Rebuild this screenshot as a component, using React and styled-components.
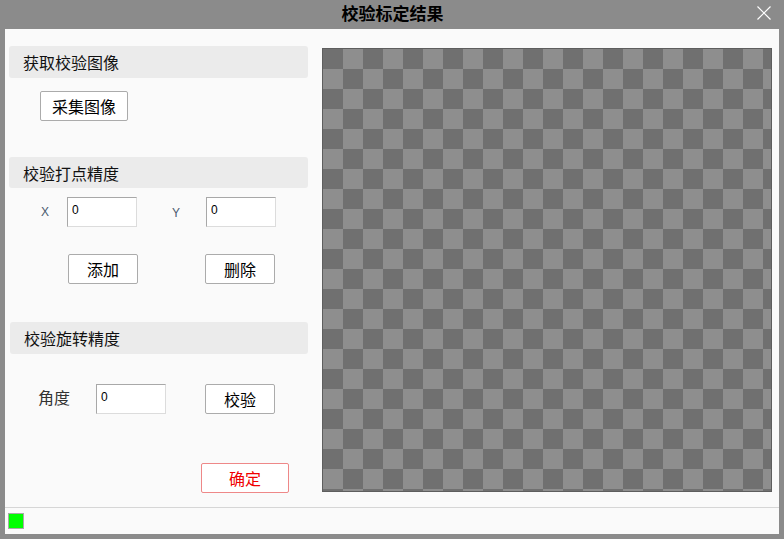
import styled, { createGlobalStyle } from "styled-components";

const cjk = `"Noto Sans CJK SC", "Noto Sans", sans-serif`;

const GlobalStyle = createGlobalStyle`
  html, body {
    margin: 0;
    padding: 0;
    background: #8b8b8b;
  }
  * { box-sizing: border-box; }
`;

export default function App() {
  return (
    <Window>
      <GlobalStyle />
      <TitleBar>
        <Title>校验标定结果</Title>
        <CloseButton>
          <svg width="14" height="14" viewBox="0 0 14 14">
            <path d="M0.5 0.5 L13.5 13.5 M13.5 0.5 L0.5 13.5" stroke="#fff" strokeWidth="1.2" fill="none" />
          </svg>
        </CloseButton>
      </TitleBar>
      <Body>
        <Main>
          <LeftColumn>
            <SectionHeader>获取校验图像</SectionHeader>
            <Row $top={13} $left={31}>
              <Button $width={88}>采集图像</Button>
            </Row>

            <SectionHeader $top={36} $height={31}>校验打点精度</SectionHeader>
            <Row $top={9}>
              <AxisLabel $left={32}>X</AxisLabel>
              <Input $left={17} defaultValue="0" />
              <AxisLabel $left={35} $drop>Y</AxisLabel>
              <Input $left={25} defaultValue="0" />
            </Row>
            <Row $top={27} $left={59}>
              <Button>添加</Button>
              <Button $left={67}>删除</Button>
            </Row>

            <SectionHeader $top={38} $offset={1}>校验旋转精度</SectionHeader>
            <Row $top={30} $left={29}>
              <Label>角度</Label>
              <Input $left={26} defaultValue="0" />
              <Button $left={39}>校验</Button>
            </Row>
            <Row $top={49} $left={192}>
              <ConfirmButton>确定</ConfirmButton>
            </Row>
          </LeftColumn>
          <Preview />
        </Main>
        <StatusBar>
          <Indicator />
        </StatusBar>
      </Body>
    </Window>
  );
}

const Window = styled.div`
  width: 784px;
  height: 539px;
  background: #8b8b8b;
  display: flex;
  flex-direction: column;
  font-family: ${cjk};
`;

const TitleBar = styled.div`
  height: 29px;
  position: relative;
  display: flex;
  align-items: center;
  justify-content: center;
`;

const Title = styled.div`
  font-size: 17px;
  font-weight: bold;
  color: #000;
  line-height: 20px;
  margin-top: -3px;
  margin-left: 1px;
`;

const CloseButton = styled.div`
  position: absolute;
  right: 13px;
  top: 6px;
  width: 14px;
  height: 14px;
  display: flex;
`;

const Body = styled.div`
  flex: 1;
  margin: 0 5px 5px 5px;
  background: #fafafa;
  display: flex;
  flex-direction: column;
`;

const Main = styled.div`
  height: 478px;
  display: flex;
`;

const LeftColumn = styled.div`
  width: 299px;
  margin-left: 4px;
  padding-top: 17px;
  display: flex;
  flex-direction: column;
`;

const SectionHeader = styled.div`
  height: ${(p) => p.$height || 32}px;
  margin-top: ${(p) => p.$top || 0}px;
  margin-left: ${(p) => p.$offset || 0}px;
  background: #ebebeb;
  border-radius: 3px;
  padding-left: 14px;
  display: flex;
  align-items: center;
  font-size: 16px;
  color: #111;
  line-height: 20px;
`;

const Row = styled.div`
  display: flex;
  align-items: center;
  height: 30px;
  margin-top: ${(p) => p.$top || 0}px;
  padding-left: ${(p) => p.$left || 0}px;
`;

const Button = styled.button`
  width: ${(p) => p.$width || 70}px;
  height: 30px;
  margin-left: ${(p) => p.$left || 0}px;
  background: #fff;
  border: 1px solid #ababab;
  border-radius: 2px;
  font-family: ${cjk};
  font-size: 16px;
  line-height: 20px;
  color: #000;
  padding: 0;
`;

const ConfirmButton = styled(Button)`
  width: 88px;
  border-color: #ee8888;
  color: #f00000;
`;

const AxisLabel = styled.span`
  margin-left: ${(p) => p.$left || 0}px;
  margin-top: ${(p) => (p.$drop ? 2 : 0)}px;
  width: 9px;
  font-family: "Liberation Sans", sans-serif;
  font-size: 12px;
  color: #4a5a70;
`;

const Label = styled.span`
  width: 32px;
  font-size: 16px;
  color: #333;
  line-height: 20px;
  margin-top: -5px;
`;

const Input = styled.input`
  width: 70px;
  height: 30px;
  margin-left: ${(p) => p.$left || 0}px;
  background: #fff;
  border-style: solid;
  border-width: 1px;
  border-color: #a8a8a8 #dcdcdc #dcdcdc #a8a8a8;
  border-radius: 0;
  padding: 0 0 5px 4px;
  font-family: "Liberation Sans", sans-serif;
  font-size: 12px;
  color: #000;
  outline: none;
`;

const Preview = styled.div`
  margin: 19px 0 0 14px;
  width: 450px;
  height: 444px;
  border: 1px solid #5e5e5e;
  background-color: #707070;
  background-image: repeating-conic-gradient(#8e8e8e 0 25%, #707070 0 50%);
  background-size: 40px 40px;
  background-position: 0 0;
`;

const StatusBar = styled.div`
  flex: 1;
  border-top: 1px solid #d6d6d6;
  padding: 5px 0 0 3px;
`;

const Indicator = styled.div`
  width: 16px;
  height: 16px;
  background: #00ff00;
  border: 1px solid #a8a8a8;
`;
